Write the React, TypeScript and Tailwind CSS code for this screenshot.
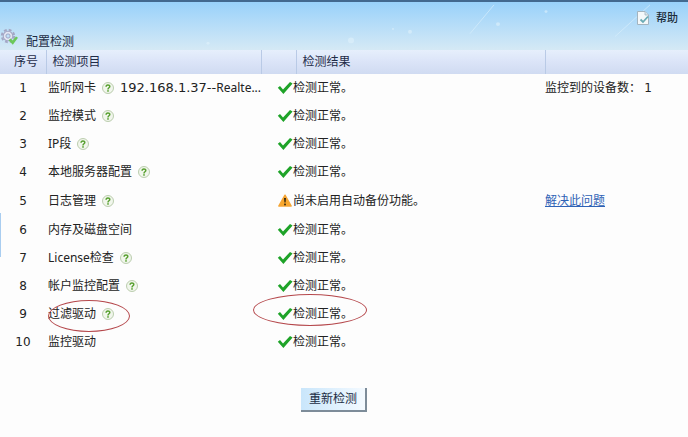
import React from 'react';

type Status = 'ok' | 'warning';

interface CheckItem {
  id: number;
  name: string;
  help?: boolean;
  address?: string;
  device?: string;
  status: Status;
  result: string;
  note?: string;
  link?: string;
  marked?: boolean;
}

const items: CheckItem[] = [
  { id: 1, name: '监听网卡', help: true, address: '192.168.1.37--', device: 'Realte...', status: 'ok', result: '检测正常。', note: '监控到的设备数：' },
  { id: 2, name: '监控模式', help: true, status: 'ok', result: '检测正常。' },
  { id: 3, name: 'IP段', help: true, status: 'ok', result: '检测正常。' },
  { id: 4, name: '本地服务器配置', help: true, status: 'ok', result: '检测正常。' },
  { id: 5, name: '日志管理', help: true, status: 'warning', result: '尚未启用自动备份功能。', link: '解决此问题' },
  { id: 6, name: '内存及磁盘空间', status: 'ok', result: '检测正常。' },
  { id: 7, name: 'License检查', help: true, status: 'ok', result: '检测正常。' },
  { id: 8, name: '帐户监控配置', help: true, status: 'ok', result: '检测正常。' },
  { id: 9, name: '过滤驱动', help: true, status: 'ok', result: '检测正常。', marked: true },
  { id: 10, name: '监控驱动', status: 'ok', result: '检测正常。' }
];

const HelpIcon = () => (
  <svg viewBox="0 0 12 12" className="w-3 h-3 shrink-0">
    <circle cx="6" cy="6" r="5.5" fill="#f1f6ec" stroke="#b4c8a6" strokeWidth="0.9" />
    <path d="M4.1 4.7C4.1 2.3 7.9 2.4 7.8 4.5C7.7 5.8 6 5.7 6 7.4" fill="none" stroke="#58a030" strokeWidth="1.5" />
    <rect x="5.2" y="8.2" width="1.6" height="1.5" fill="#58a030" />
  </svg>
);

const CheckIcon = () => (
  <svg viewBox="0 0 16 14" className="w-4 h-3.5 shrink-0">
    <path d="M0.8 6.8L3 5L6 8.4L13 1L15.6 2.4L6.4 13Z" fill="#1ea328" />
  </svg>
);

const WarningIcon = () => (
  <svg viewBox="0 0 16 14" className="w-4 h-3.5 shrink-0">
    <path d="M8 1.2L14.2 12H1.8Z" fill="#f9a72b" stroke="#f5a535" strokeWidth="1.4" strokeLinejoin="round" />
    <path d="M7 4H9L8.6 8.6H7.4Z" fill="#3a2a10" />
    <rect x="7.1" y="9.6" width="1.8" height="1.7" fill="#3a2a10" />
  </svg>
);

const GearIcon = () => (
  <svg viewBox="0 0 18 18" className="w-[18px] h-[18px] shrink-0">
    <circle cx="8" cy="8" r="6.2" fill="none" stroke="#a3a6c4" strokeWidth="2" strokeDasharray="2.8 2.07" />
    <circle cx="8" cy="8" r="4.8" fill="#e3e6f3" stroke="#a3a6c4" strokeWidth="1.1" />
    <circle cx="8" cy="8" r="2.1" fill="#bfe0f8" stroke="#9a9ebf" strokeWidth="0.9" />
    <path d="M8.6 12.2L10.6 10.6L12.5 12.6L16 8.6L18 9.8L12.8 16.8Z" fill="#6cc85a" />
  </svg>
);

const PageIcon = () => (
  <svg viewBox="0 0 14 16" className="w-3.5 h-4 shrink-0">
    <path d="M1.5 1.5H9L12.5 5V14.5H1.5Z" fill="#f4f8fa" stroke="#a3b4bf" />
    <path d="M9 1.5V5H12.5" fill="#dbe6ec" stroke="#a3b4bf" strokeWidth="0.8" />
    <path d="M4.5 9.5L7 12L12 6.5" fill="none" stroke="#6aabb5" strokeWidth="1.8" />
  </svg>
);

// red ring around a cell's content
const Ring: React.FC<{ className: string }> = ({ className }) => (
  <span className={`absolute rounded-[50%] border border-[#b5484c] pointer-events-none ${className}`} />
);

const Sky = () => (
  <svg viewBox="0 0 688 50" preserveAspectRatio="none" className="absolute inset-0 w-full h-full">
    <g stroke="#d8effd" strokeWidth="1" opacity="0.7">
      <path d="M494 3L470 33" />
      <path d="M650 3L615 36" />
    </g>
    <g fill="#e0f2fc" opacity="0.6">
      <circle cx="351" cy="40" r="3" />
      <circle cx="410" cy="31" r="2" />
      <circle cx="393" cy="28" r="1" />
      <circle cx="498" cy="23" r="2" />
      <circle cx="546" cy="10" r="1.5" />
      <circle cx="208" cy="43" r="1.5" />
    </g>
  </svg>
);

const App: React.FC = () => {
  return (
    <div className="relative min-h-screen bg-[#fdfdfd] text-xs text-[#222] font-['Noto_Sans','Noto_Sans_CJK_SC',sans-serif]">
      <header className="relative border-t-2 border-[#42698f] bg-linear-to-b from-[#98d1fa] to-[#d5e9f5]">
        <Sky />
        <div className="relative flex justify-end px-2.5 pt-2">
          <a href="#help" className="flex items-center gap-1.5 text-[11px] leading-4 font-medium text-[#1c2b3a]">
            <PageIcon />
            帮助
          </a>
        </div>
        <div className="relative flex items-end gap-2 h-6 text-[#1c2c44]">
          <div className="pb-1">
            <GearIcon />
          </div>
          <h1>配置检测</h1>
        </div>
      </header>

      <table className="w-full table-fixed border-collapse text-left">
        <thead>
          <tr className="h-6 bg-linear-to-b from-[#e6effc] via-[#dbe4f8] to-[#d0dbf2] text-[#1f2c48]">
            <th className="w-[46px] pl-3.5 font-normal border-r border-[#b9cae6]">序号</th>
            <th className="w-[215px] pl-1.5 font-normal border-r border-[#b9cae6]">检测项目</th>
            <th className="w-[35px] border-r border-[#b9cae6]" />
            <th className="w-[249px] pl-1.5 font-normal border-r border-[#b9cae6]">检测结果</th>
            <th />
          </tr>
        </thead>
        <tbody>
          {items.map((item) => (
            <tr key={item.id} className={item.status === 'warning' ? 'h-[30px]' : 'h-7'}>
              <td className="font-['DejaVu_Sans',sans-serif] text-center">{item.id}</td>
              <td className="pl-0.5">
                <div className="relative flex items-center gap-1.5 whitespace-nowrap">
                  <span>{item.name}</span>
                  {item.help && <HelpIcon />}
                  {item.address && (
                    <span>
                      <span className="font-['DejaVu_Sans',sans-serif] text-[13px] leading-4">{item.address}</span>
                      {item.device}
                    </span>
                  )}
                  {item.marked && <Ring className="left-0 -top-1.5 w-[82px] h-8" />}
                </div>
              </td>
              <td colSpan={2} className="pl-4">
                <div className="relative flex items-center">
                  {item.status === 'ok' ? <CheckIcon /> : <WarningIcon />}
                  <span>{item.result}</span>
                  {item.marked && <Ring className="-left-6 -top-3 w-[114px] h-8" />}
                </div>
              </td>
              <td>
                {item.note && (
                  <span>
                    {item.note} <span className="font-['DejaVu_Sans',sans-serif]">1</span>
                  </span>
                )}
                {item.link && (
                  <a href="#fix" className="text-[#2f62b5] underline">
                    {item.link}
                  </a>
                )}
              </td>
            </tr>
          ))}
        </tbody>
      </table>

      <div className="flex justify-center pt-8 pr-5">
        <button
          type="button"
          className="px-2 h-6 bg-linear-to-r from-[#c9e6fb] to-[#f4faff] border-r-2 border-b-2 border-[#7d8c99] text-[#1c2c44]"
        >
          重新检测
        </button>
      </div>
      {/* collapsed side panel handle */}
      <div className="absolute left-0 top-[213px] w-px h-11 bg-[#a9cdf0]" />
    </div>
  );
};

export default App;
